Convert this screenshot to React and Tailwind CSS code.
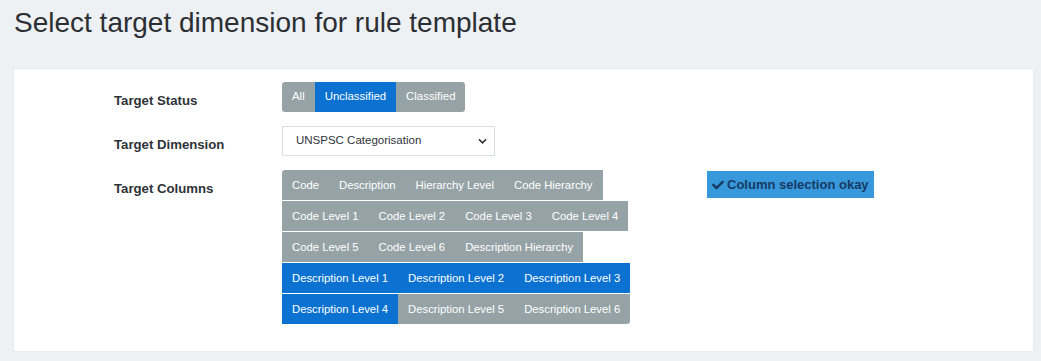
import { useState } from 'react';

const COLUMNS = [
  'Code', 'Description', 'Hierarchy Level', 'Code Hierarchy',
  'Code Level 1', 'Code Level 2', 'Code Level 3', 'Code Level 4',
  'Code Level 5', 'Code Level 6', 'Description Hierarchy',
  'Description Level 1', 'Description Level 2', 'Description Level 3',
  'Description Level 4', 'Description Level 5', 'Description Level 6',
];

const PICKED = ['Description Level 1', 'Description Level 2', 'Description Level 3', 'Description Level 4'];

function CheckIcon() {
  return (
    <svg viewBox="0 0 512 512" className="w-[12px] h-[12px] fill-current" aria-hidden="true">
      <path d="M173.9 439.4l-166.4-166.4c-10-10-10-26.2 0-36.2l36.2-36.2c10-10 26.2-10 36.2 0L192 312.7 432.1 72.6c10-10 26.2-10 36.2 0l36.2 36.2c10 10 10 26.2 0 36.2L210.1 439.4c-10 10-26.2 10-36.2 0z" />
    </svg>
  );
}

export default function App() {
  const [status, setStatus] = useState('Unclassified');
  const [picked, setPicked] = useState(PICKED);

  const toggle = (c) => setPicked(p => (p.includes(c) ? p.filter(x => x !== c) : [...p, c]));

  return (
    <div className="min-h-[361px] bg-[#eef1f3] pt-[4px] pb-[9px] pl-[13px] pr-[7px]" style={{ fontFamily: '"Liberation Sans", Arial, sans-serif' }}>
      <h1 className="text-[28px] leading-[38px] text-[#2b2f33] pl-[1px] mb-[26px]">Select target dimension for rule template</h1>

      <div className="bg-white border border-[#e9eced] pt-[13px] pb-[27px] pl-[100px]">
        <div className="grid grid-cols-[168px_auto] gap-y-[14px] items-start">
          <div className="h-[30px] flex items-center text-[13.2px] font-bold text-[#2e3338] pt-[8px]">Target Status</div>
          <div className="flex">
            {['All', 'Unclassified', 'Classified'].map((s, i) => (
              <button
                key={s}
                type="button"
                onClick={() => setStatus(s)}
                className={`h-[30px] px-[10px] text-[11.4px] text-white ${s === status ? 'bg-[#0b72d1]' : 'bg-[#96a3a6]'} ${i === 0 ? 'rounded-l-[3px]' : ''} ${i === 2 ? 'rounded-r-[3px]' : ''}`}
              >
                {s}
              </button>
            ))}
          </div>

          <div className="h-[30px] flex items-center text-[13.2px] font-bold text-[#2e3338] pt-[8px]">Target Dimension</div>
          <div className="relative w-[213px] h-[30px]">
            <select className="appearance-none w-full h-full border border-[#dcdfe2] bg-white pl-[13px] text-[11.5px] text-[#2e3338] outline-none">
              <option>UNSPSC Categorisation</option>
            </select>
            <svg viewBox="0 0 10 6" className="absolute right-[8px] top-[12px] w-[9px] h-[6px] pointer-events-none" aria-hidden="true">
              <path d="M1 1l4 4 4-4" fill="none" stroke="#333" strokeWidth="1.8" />
            </svg>
          </div>

          <div className="h-[30px] flex items-center text-[13.2px] font-bold text-[#2e3338] pt-[8px]">Target Columns</div>
          <div className="flex items-start">
            <div className="w-[350px] flex flex-wrap gap-y-px">
              {COLUMNS.map((c, i) => (
                <button
                  key={c}
                  type="button"
                  onClick={() => toggle(c)}
                  className={`h-[30px] px-[10px] text-[11.3px] text-white ${picked.includes(c) ? 'bg-[#0b72d1]' : 'bg-[#96a3a6]'} ${i === 0 ? 'rounded-tl-[3px]' : ''} ${i === COLUMNS.length - 1 ? 'rounded-br-[3px]' : ''}`}
                >
                  {c}
                </button>
              ))}
            </div>
            <button type="button" className="ml-[75px] mt-px h-[27px] px-[5px] flex items-center gap-[3px] bg-[#3798dc] text-[#173a63] text-[13px] font-bold">
              <CheckIcon />
              Column selection okay
            </button>
          </div>
        </div>
      </div>
    </div>
  );
}
